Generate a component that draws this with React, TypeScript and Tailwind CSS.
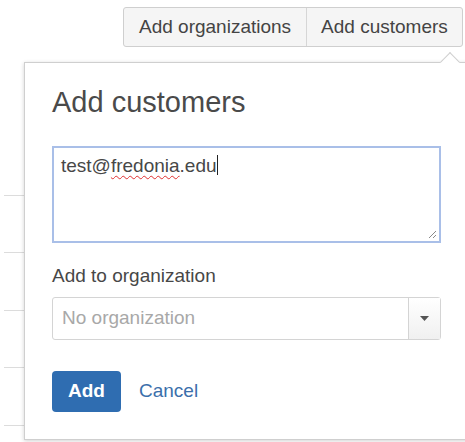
import React from "react";

const rows = [0, 1, 2, 3, 4];

function ResizeGrip() {
  return (
    <svg width="10" height="10" viewBox="0 0 10 10" className="absolute right-[2px] bottom-[2px]">
      <line x1="9" y1="2" x2="2" y2="9" stroke="#8a8a8a" strokeWidth="1" />
      <line x1="9" y1="6" x2="6" y2="9" stroke="#8a8a8a" strokeWidth="1" />
    </svg>
  );
}

export default function App() {
  return (
    <div
      className="relative w-[465px] h-[442px] overflow-hidden bg-white text-[#444]"
      style={{ fontFamily: '"Liberation Sans", Arial, sans-serif' }}
    >
      {/* toolbar */}
      <div className="flex pl-[123px] pt-[7px]">
        <div className="flex h-[40px] rounded-[3px] border border-[#cfcfcf] bg-[#f5f5f5] text-[19px] text-[#444]">
          <div className="flex items-center px-[15px] border-r border-[#d6d6d6] whitespace-nowrap">
            Add organizations
          </div>
          <div className="flex items-center px-[14px] whitespace-nowrap">Add customers</div>
        </div>
      </div>

      {/* list rows behind the popover */}
      <div className="mt-[91px] ml-[4px] w-[200px]">
        {rows.map((r) => (
          <div key={r} className="h-[57.5px] border-b border-[#dcdcdc]" />
        ))}
      </div>

      {/* popover */}
      <div className="absolute left-[24px] top-[62px] w-[460px] h-[378px] border border-[#cfcfcf] bg-white shadow-[0_1px_4px_rgba(0,0,0,0.18)] pl-[27px] pt-[25px]">
        <div className="absolute -top-[8px] left-[418px] w-[14px] h-[14px] rotate-45 border-l border-t border-[#cfcfcf] bg-white" />

        <div className="text-[29px] leading-[29px] text-[#4a4a4a]">Add customers</div>

        <div className="relative mt-[29px] w-[389px] h-[97px] border-2 border-[#a9bfe8] px-[7px] pt-[6px] text-[19px] leading-[24px] text-[#474747]">
          <span>test@</span>
          <span className="underline decoration-wavy decoration-[#e03030] decoration-1 underline-offset-[3px]">
            fredonia
          </span>
          <span>.edu</span>
          <span className="inline-block w-px h-[20px] bg-[#222] align-[-3px]" />
          <ResizeGrip />
        </div>

        <div className="mt-[21px] text-[19px] leading-[24px] text-[#474747]">Add to organization</div>

        <div className="mt-[9px] flex w-[389px] h-[43px] rounded-[3px] border border-[#d4d4d4] bg-white">
          <div className="flex-1 flex items-center pl-[9px] text-[19px] text-[#a8a8a8]">No organization</div>
          <div className="w-[32px] flex items-center justify-center border-l border-[#d4d4d4] bg-gradient-to-b from-white to-[#f0f0f0]">
            <svg width="9" height="5" viewBox="0 0 9 5">
              <path d="M0 0 H9 L4.5 5 Z" fill="#555" />
            </svg>
          </div>
        </div>

        <div className="mt-[31px] flex items-center gap-[18px]">
          <div className="flex items-center justify-center w-[69px] h-[41px] rounded-[4px] bg-[#2f6db1] text-white font-bold text-[19px]">
            Add
          </div>
          <div className="text-[19px] text-[#3b6fab]">Cancel</div>
        </div>
      </div>
    </div>
  );
}
